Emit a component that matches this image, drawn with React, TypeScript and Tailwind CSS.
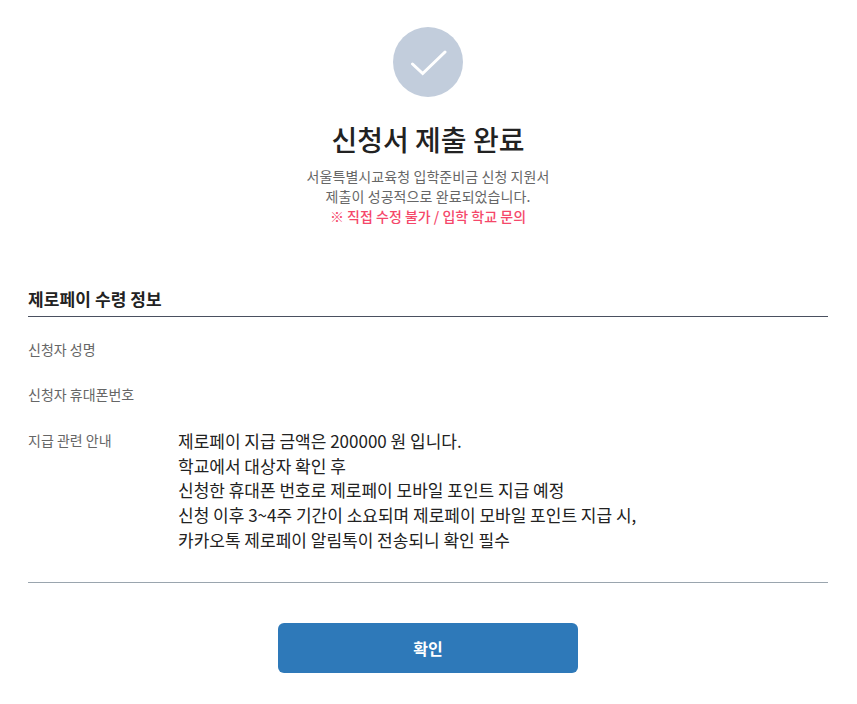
const lines = [
  "제로페이 지급 금액은 200000 원 입니다.",
  "학교에서 대상자 확인 후",
  "신청한 휴대폰 번호로 제로페이 모바일 포인트 지급 예정",
  "신청 이후 3~4주 기간이 소요되며 제로페이 모바일 포인트 지급 시,",
  "카카오톡 제로페이 알림톡이 전송되니 확인 필수",
];

export default function App() {
  return (
    <div className="min-h-[704px] w-[856px] bg-white px-[28px] pt-[27px] text-[#222] font-['Noto_Sans_CJK_KR','Noto_Sans',sans-serif]">
      <div className="flex flex-col items-center text-center">
        <div className="size-[70px] rounded-full bg-[#c2cddc] flex items-center justify-center">
          <svg width="38" height="28" viewBox="0 0 38 28" fill="none" stroke="white" strokeWidth="3" strokeLinecap="round">
            <path d="M3.5 16 L13.7 25.5 L36 4" />
          </svg>
        </div>
        <h1 className="mt-[20px] text-[28px] leading-[44px] font-medium">신청서 제출 완료</h1>
        <p className="mt-[5px] text-[14px] leading-[20px] tracking-[0.08px] text-[#666]">
          서울특별시교육청 입학준비금 신청 지원서
          <br />
          제출이 성공적으로 완료되었습니다.
          <br />
          <span className="text-[#f5476a] font-medium tracking-normal">※ 직접 수정 불가 / 입학 학교 문의</span>
        </p>
      </div>
      <h2 className="mt-[61px] pb-[5px] text-[17px] leading-[24px] font-semibold tracking-[0.1px] border-b border-[#4a5060]">제로페이 수령 정보</h2>
      <div className="mt-[21px] flex flex-col gap-[23px] text-[14px] leading-[22px] text-[#666]">
        <div>신청자 성명</div>
        <div>신청자 휴대폰번호</div>
        <div className="flex mt-[1px]">
          <div className="w-[150px] shrink-0">지급 관련 안내</div>
          <div className="text-[17px] leading-[24.7px] text-[#222]">
            {lines.map((l) => (
              <div key={l}>{l}</div>
            ))}
          </div>
        </div>
      </div>
      <div className="mt-[29px] border-t border-[#9aa5ae]" />
      <div className="mt-[40px] flex justify-center">
        <button className="w-[300px] h-[50px] rounded-[6px] bg-[#2e79b9] text-white text-[16px] font-semibold">확인</button>
      </div>
    </div>
  );
}
